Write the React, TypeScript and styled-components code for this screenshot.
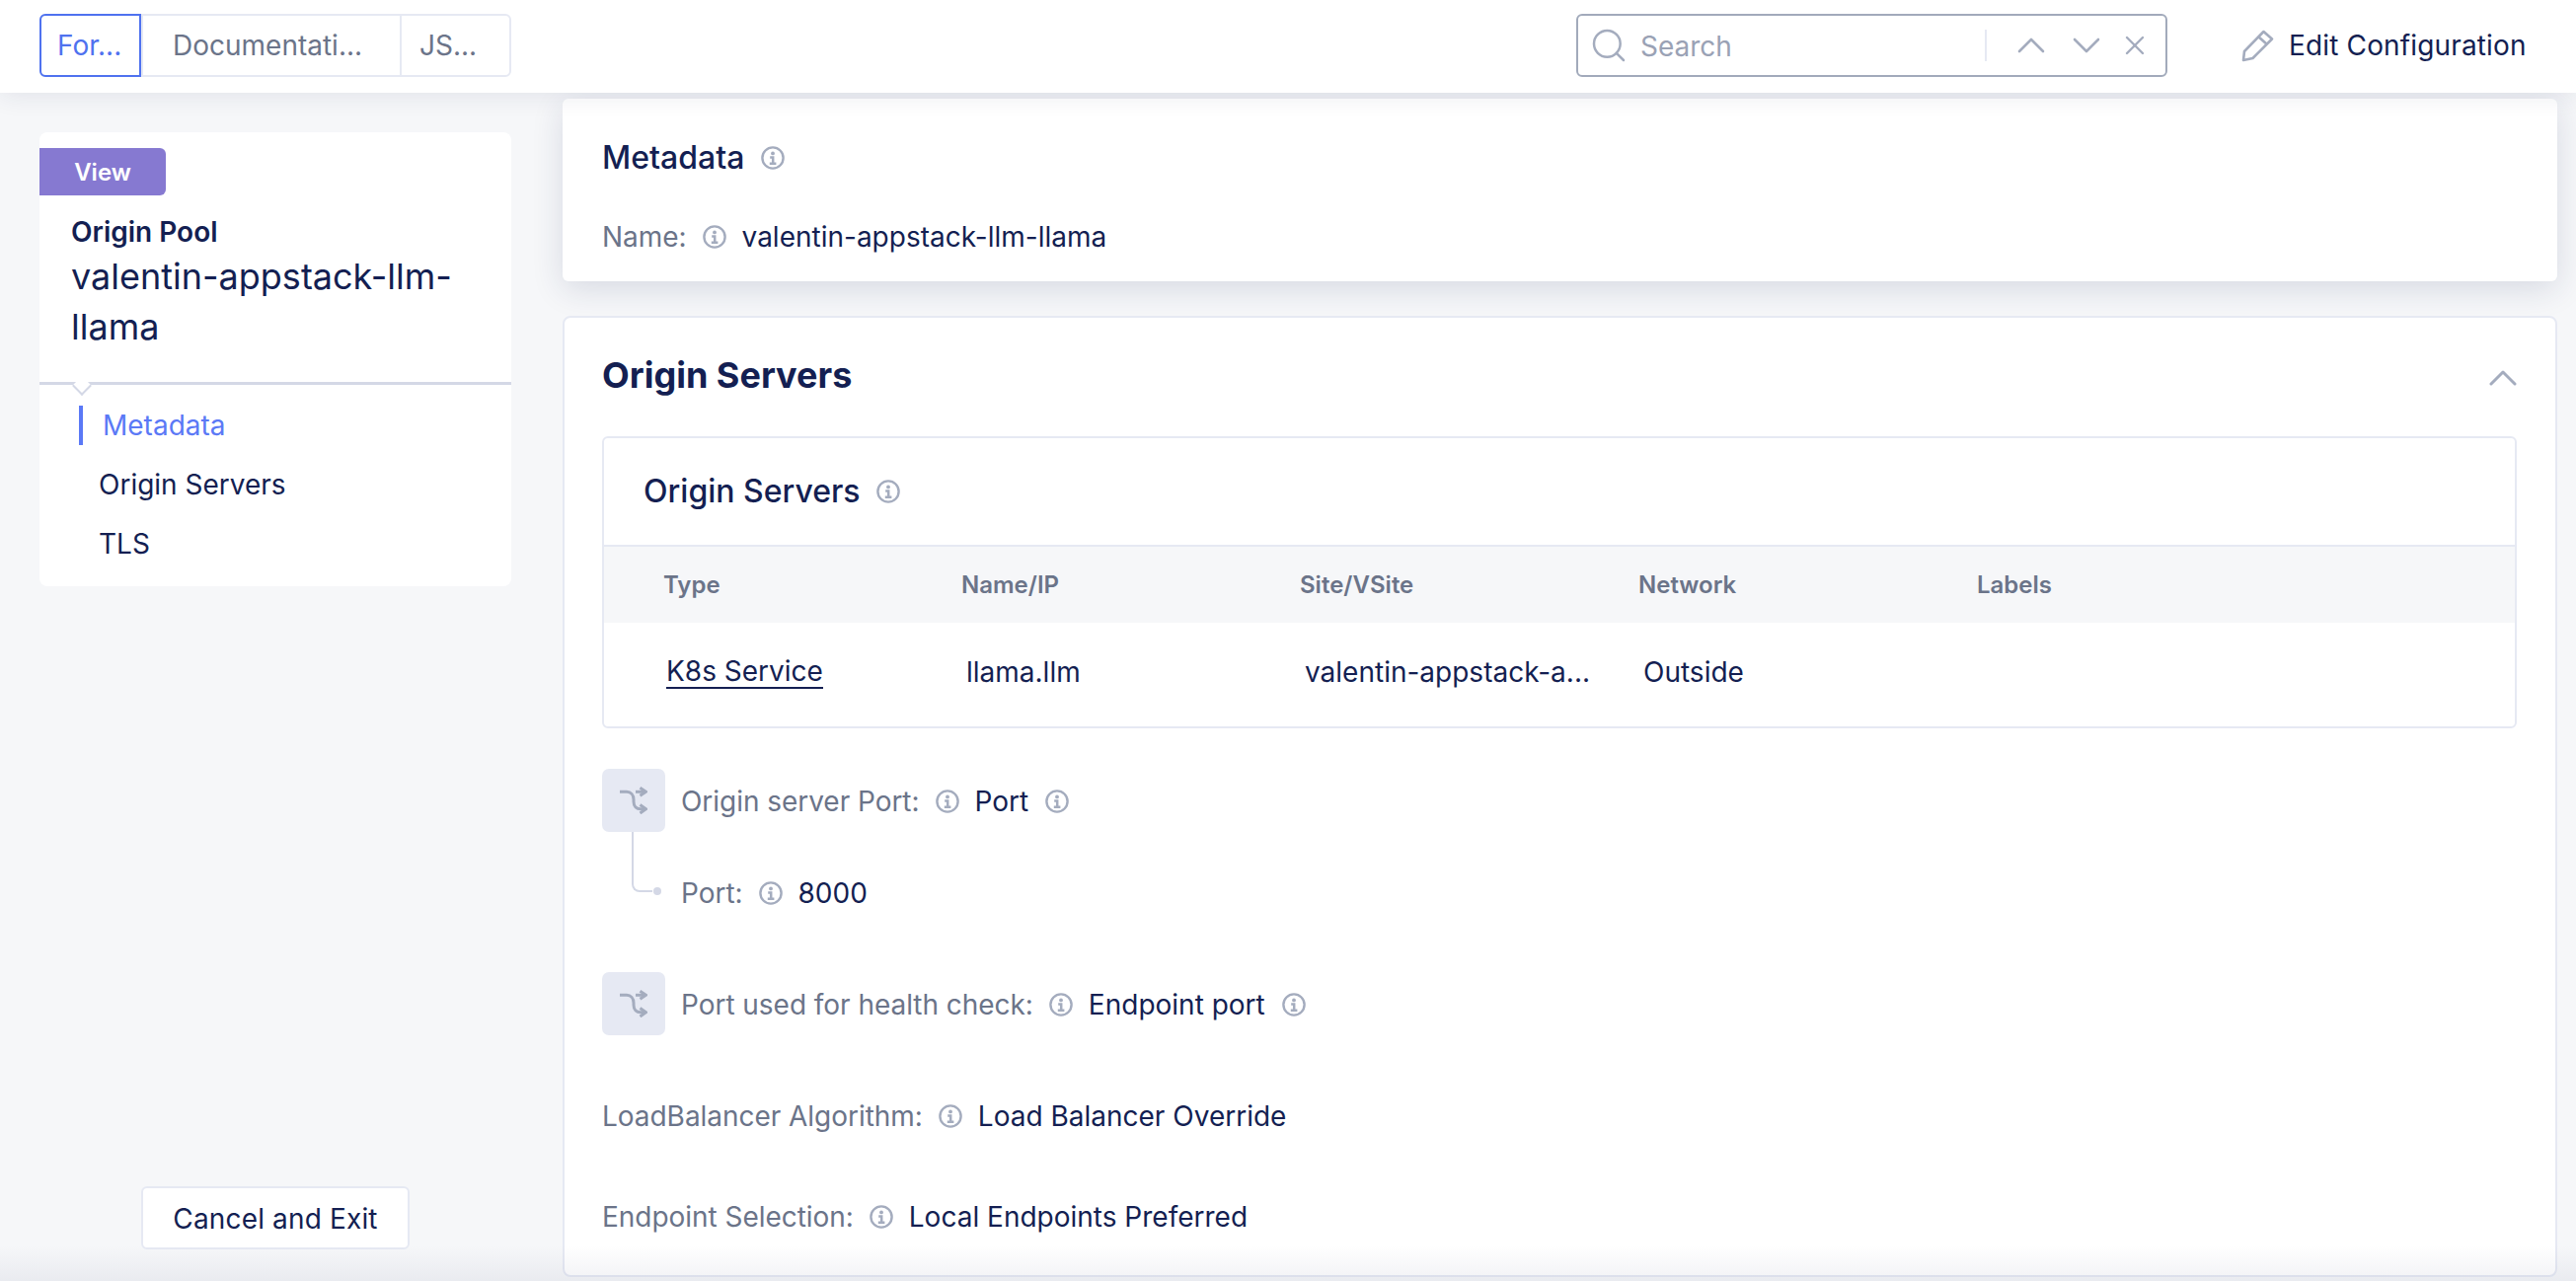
import React from 'react';
import styled, { createGlobalStyle } from 'styled-components';
import { ChevronDown, ChevronUp, Search as SearchGlyph, X } from 'lucide-react';

const navy = '#141f52';
const grey = '#6b7489';
const iconGrey = '#a4acbe';
const line = '#e6e9f3';

const GlobalStyle = createGlobalStyle`
  html, body {
    margin: 0;
    padding: 0;
    height: 100%;
    overflow: hidden;
    background: #f6f7f9;
    font-family: Inter, "Noto Sans", sans-serif;
    color: ${navy};
    font-size: 28px;
  }
  * { box-sizing: border-box; }
`;

const Page = styled.div`
  position: relative;
  width: 2610px;
  height: 1298px;
  display: flex;
  flex-direction: column;
  overflow: hidden;
  &::after {
    content: '';
    position: absolute;
    left: 0;
    right: 0;
    bottom: 0;
    height: 36px;
    background: linear-gradient(to bottom, rgba(30, 40, 90, 0), rgba(30, 40, 90, 0.06));
    pointer-events: none;
  }
`;

const TopBar = styled.header`
  position: relative;
  z-index: 1;
  flex: none;
  height: 94px;
  padding: 14px 52px 16px 40px;
  display: flex;
  align-items: center;
  background: #fff;
  box-shadow: 0 2px 24px rgba(30, 40, 90, 0.1);
`;

const Tabs = styled.div`
  display: flex;
  height: 64px;
  width: 478px;
  border: 2px solid ${line};
  border-radius: 6px;
`;

const Tab = styled.div<{ $active?: boolean; $width: number; $pad: number }>`
  width: ${(p) => p.$width}px;
  margin: ${(p) => (p.$active ? '-2px 0 -2px -2px' : '0')};
  padding-left: ${(p) => p.$pad}px;
  display: flex;
  align-items: center;
  font-size: 28px;
  color: ${(p) => (p.$active ? '#4f72ef' : grey)};
  border: ${(p) => (p.$active ? '2px solid #4f72ef' : 'none')};
  border-radius: ${(p) => (p.$active ? '6px 0 0 6px' : '0')};
  & + & {
    border-left: 2px solid ${line};
  }
`;

const SearchBox = styled.div`
  margin-left: auto;
  width: 599px;
  height: 64px;
  border: 2px solid #a2aabb;
  border-radius: 6px;
  display: flex;
  align-items: center;
  padding: 0 12px 0 11px;
  color: ${iconGrey};
`;

const SearchText = styled.span`
  width: 349px;
  margin-left: 12px;
  padding-top: 2px;
  color: #9aa2b5;
  font-size: 28px;
`;

const SearchDivider = styled.span`
  width: 2px;
  height: 32px;
  background: ${line};
  margin-right: 21px;
`;

const SearchAction = styled.span`
  display: flex;
  margin-right: 8px;
  &:last-child {
    margin-right: 0;
    margin-left: 1px;
  }
`;

const EditLink = styled.div`
  flex: none;
  width: 288px;
  margin-left: 74px;
  display: flex;
  align-items: center;
  gap: 15px;
  font-size: 28px;
  letter-spacing: 0.15px;
  white-space: nowrap;
`;

const Body = styled.div`
  flex: 1;
  min-height: 0;
  display: flex;
`;

const Sidebar = styled.aside`
  flex: none;
  width: 570px;
  padding: 40px 52px 32px 40px;
  display: flex;
  flex-direction: column;
`;

const SideCard = styled.div`
  background: #fff;
  border-radius: 8px;
  height: 460px;
  padding-top: 16px;
`;

const Badge = styled.div`
  width: 128px;
  height: 48px;
  background: #8679d1;
  color: #fff;
  border-radius: 0 6px 6px 0;
  display: flex;
  align-items: center;
  justify-content: center;
  font-size: 24px;
  font-weight: 600;
`;

const ObjectKind = styled.div`
  margin: 20px 32px 0;
  font-size: 28px;
  line-height: 34px;
  font-weight: 600;
`;

const ObjectName = styled.div`
  margin: 0 32px;
  height: 135px;
  font-size: 36px;
  line-height: 51px;
  padding-top: 3px;
`;

const SideDivider = styled.div`
  position: relative;
  height: 3px;
  background: #d4d8e6;
  &::after {
    content: '';
    position: absolute;
    left: 36px;
    top: -3px;
    width: 12px;
    height: 12px;
    background: #fff;
    border-right: 2px solid #d4d8e6;
    border-bottom: 2px solid #d4d8e6;
    transform: rotate(45deg);
  }
`;

const Nav = styled.nav`
  padding-top: 21px;
  display: flex;
  flex-direction: column;
  gap: 20px;
`;

const NavItem = styled.div<{ $active?: boolean }>`
  height: 40px;
  margin-left: ${(p) => (p.$active ? 40 : 60)}px;
  padding-left: ${(p) => (p.$active ? 20 : 0)}px;
  border-left: ${(p) => (p.$active ? '4px solid #5b79f6' : 'none')};
  display: flex;
  align-items: center;
  font-size: 28px;
  color: ${(p) => (p.$active ? '#5b79f6' : navy)};
`;

const CancelButton = styled.button`
  margin-top: auto;
  align-self: center;
  width: 272px;
  height: 64px;
  padding: 2px 0 0;
  background: #fff;
  border: 2px solid ${line};
  border-radius: 6px;
  font-family: inherit;
  font-size: 28px;
  letter-spacing: 0.15px;
  color: ${navy};
`;

const Main = styled.main`
  flex: none;
  width: 2021px;
  padding-top: 6px;
  display: flex;
  flex-direction: column;
  gap: 35px;
`;

const MetaCard = styled.section`
  height: 185px;
  padding: 38px 40px 0;
  background: #fff;
  border-radius: 6px;
  box-shadow: 0 8px 32px rgba(30, 40, 90, 0.14);
`;

const Title = styled.h2`
  margin: 0;
  display: flex;
  align-items: center;
  gap: 17px;
  font-size: 32px;
  line-height: 44px;
  font-weight: 500;
`;

const ServersCard = styled.section`
  height: 974px;
  padding: 0 39px 0 38px;
  background: #fff;
  border: 2px solid ${line};
  border-radius: 8px;
`;

const CardHead = styled.div`
  height: 120px;
  display: flex;
  align-items: center;
  justify-content: space-between;
  padding-bottom: 4px;
`;

const Heading = styled.h1`
  margin: 0;
  font-size: 36px;
  font-weight: 700;
`;

const Collapse = styled.span`
  display: flex;
  margin: 6px -10px 0 0;
  color: ${iconGrey};
`;

const InnerBox = styled.div`
  height: 296px;
  border: 2px solid ${line};
  border-radius: 6px;
`;

const InnerTitle = styled(Title)`
  height: 108px;
  padding-left: 40px;
  gap: 16px;
`;

const TableRow = styled.div<{ $head?: boolean }>`
  display: grid;
  grid-template-columns: 302px 343px 343px 343px 1fr;
  align-items: center;
  height: ${(p) => (p.$head ? 79 : 107)}px;
  margin-bottom: ${(p) => (p.$head ? -2 : 0)}px;
  padding-left: ${(p) => (p.$head ? 60 : 63)}px;
  padding-bottom: ${(p) => (p.$head ? 0 : 3)}px;
  background: ${(p) => (p.$head ? '#f6f7f9' : 'transparent')};
  border-top: ${(p) => (p.$head ? `2px solid ${line}` : 'none')};
  font-size: ${(p) => (p.$head ? 24 : 28)}px;
  font-weight: ${(p) => (p.$head ? 600 : 400)};
  color: ${(p) => (p.$head ? grey : navy)};
`;

const Cell = styled.span`
  padding-left: 2px;
`;

const TypeLink = styled.span`
  justify-self: start;
  line-height: 32px;
  border-bottom: 2px solid ${navy};
`;

const Rows = styled.div`
  padding-top: 41px;
  display: flex;
  flex-direction: column;
`;

const Field = styled.div`
  display: flex;
  align-items: center;
  gap: 16px;
  line-height: 40px;
  font-size: 28px;
`;

const IconField = styled(Field)<{ $top?: number }>`
  padding-top: 2px;
  margin-top: ${(p) => p.$top ?? 0}px;
`;

const Label = styled.span`
  color: ${grey};
  letter-spacing: -0.04px;
`;

const Value = styled.span`
  color: ${navy};
  margin-right: 1px;
`;

const RowIcon = styled.span`
  flex: none;
  width: 64px;
  height: 64px;
  margin-top: -2px;
  border-radius: 7px;
  background: #e6e9f3;
  display: flex;
  align-items: center;
  justify-content: center;
`;

const SubRow = styled.div`
  display: flex;
  height: 82px;
`;

const Elbow = styled.span`
  width: 21px;
  height: 61px;
  margin-left: 30px;
  border-left: 2px solid #d4d8e6;
  border-bottom: 2px solid #d4d8e6;
  border-bottom-left-radius: 8px;
`;

const Dot = styled.span`
  width: 8px;
  height: 8px;
  margin: 56px 0 0 1px;
  border-radius: 50%;
  background: #d4d8e6;
`;

const SubField = styled(Field)`
  margin: 41px 0 0 20px;
`;

const SpacedField = styled(Field)<{ $top: number }>`
  margin-top: ${(p) => p.$top}px;
`;

const Info = () => (
  <svg width="24" height="24" viewBox="0 0 24 24" fill="none" stroke={iconGrey} strokeWidth="2.4" style={{ flex: 'none' }}>
    <circle cx="12" cy="12" r="10.6" />
    <circle cx="12" cy="7.4" r="1.9" fill={iconGrey} stroke="none" />
    <path d="M9.2 11.400h3v6.200M8.800 17.800h6.600" strokeWidth="2.500" />
  </svg>
);

const Routes = () => (
  <svg width="28" height="28" viewBox="0 0 28 28" fill="none" stroke={iconGrey} strokeWidth="3">
    <path d="M0 5.300h7c4 0 7 3 7 8v2c0 5 3 7.400 7 7.400h5" />
    <path d="M16 5.300h10" />
    <path d="M20.500 1.300 26.500 5.300 20.500 9.300M20.500 18.500l6 4.200-6 4.300" />
  </svg>
);

const Pencil = () => (
  <svg width="34" height="35" viewBox="-1 -1 34 35" fill="none" stroke={iconGrey} strokeWidth="2.600" strokeLinejoin="round" style={{ flex: 'none' }}>
    <path d="M2 31l1-9L22.500 2 31 9.500 11.500 29z" />
    <path d="M17 7l9 8" />
  </svg>
);

const App: React.FC = () => (
  <Page>
    <GlobalStyle />
    <TopBar>
      <Tabs>
        <Tab $active $width={103} $pad={16}>For...</Tab>
        <Tab $width={262} $pad={30}>Documentati...</Tab>
        <Tab $width={111} $pad={18}>JS...</Tab>
      </Tabs>
      <SearchBox>
        <SearchGlyph size={40} strokeWidth={1.5} />
        <SearchText>Search</SearchText>
        <SearchDivider />
        <SearchAction><ChevronUp size={48} strokeWidth={1.3} /></SearchAction>
        <SearchAction><ChevronDown size={48} strokeWidth={1.3} /></SearchAction>
        <SearchAction><X size={32} strokeWidth={1.8} /></SearchAction>
      </SearchBox>
      <EditLink>
        <Pencil />
        Edit Configuration
      </EditLink>
    </TopBar>
    <Body>
      <Sidebar>
        <SideCard>
          <Badge>View</Badge>
          <ObjectKind>Origin Pool</ObjectKind>
          <ObjectName>valentin-appstack-llm-llama</ObjectName>
          <SideDivider />
          <Nav>
            <NavItem $active>Metadata</NavItem>
            <NavItem>Origin Servers</NavItem>
            <NavItem>TLS</NavItem>
          </Nav>
        </SideCard>
        <CancelButton>Cancel and Exit</CancelButton>
      </Sidebar>
      <Main>
        <MetaCard>
          <Title>Metadata <Info /></Title>
          <SpacedField $top={38}>
            <Label>Name:</Label>
            <Info />
            <Value>valentin-appstack-llm-llama</Value>
          </SpacedField>
        </MetaCard>
        <ServersCard>
          <CardHead>
            <Heading>Origin Servers</Heading>
            <Collapse><ChevronUp size={48} strokeWidth={1.5} /></Collapse>
          </CardHead>
          <InnerBox>
            <InnerTitle>Origin Servers <Info /></InnerTitle>
            <TableRow $head>
              <span>Type</span>
              <span>Name/IP</span>
              <span>Site/VSite</span>
              <span>Network</span>
              <span>Labels</span>
            </TableRow>
            <TableRow>
              <TypeLink>K8s Service</TypeLink>
              <Cell>llama.llm</Cell>
              <Cell>valentin-appstack-a...</Cell>
              <Cell>Outside</Cell>
              <Cell />
            </TableRow>
          </InnerBox>
          <Rows>
            <IconField>
              <RowIcon><Routes /></RowIcon>
              <Label>Origin server Port:</Label>
              <Info />
              <Value>Port</Value>
              <Info />
            </IconField>
            <SubRow>
              <Elbow />
              <Dot />
              <SubField>
                <Label>Port:</Label>
                <Info />
                <Value>8000</Value>
              </SubField>
            </SubRow>
            <IconField $top={60}>
              <RowIcon><Routes /></RowIcon>
              <Label>Port used for health check:</Label>
              <Info />
              <Value>Endpoint port</Value>
              <Info />
            </IconField>
            <SpacedField $top={62}>
              <Label>LoadBalancer Algorithm:</Label>
              <Info />
              <Value>Load Balancer Override</Value>
            </SpacedField>
            <SpacedField $top={62}>
              <Label>Endpoint Selection:</Label>
              <Info />
              <Value>Local Endpoints Preferred</Value>
            </SpacedField>
          </Rows>
        </ServersCard>
      </Main>
    </Body>
  </Page>
);

export default App;
